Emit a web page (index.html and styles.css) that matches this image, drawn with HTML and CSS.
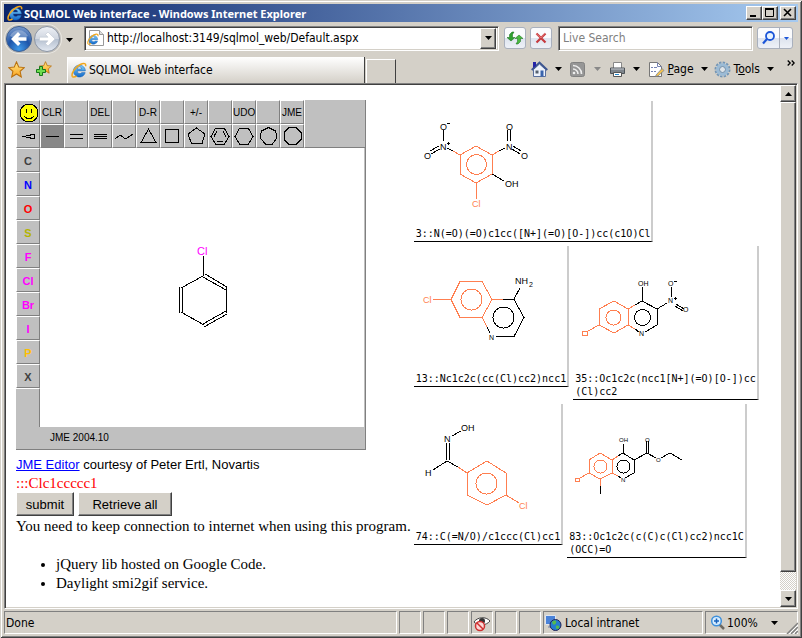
FILE: index.html
```html
<!DOCTYPE html>
<html lang="en">
<head>
<meta charset="utf-8">
<title>SQLMOL Web interface</title>
<link rel="stylesheet" href="styles.css">
</head>
<body>
<svg class="defs" width="0" height="0" aria-hidden="true">
  <defs>
    <linearGradient id="eBlue" x1="0" y1="0" x2="0" y2="1"><stop offset="0" stop-color="#7fd0fa"/><stop offset="1" stop-color="#1268c8"/></linearGradient>
    <radialGradient id="backFill" cx=".5" cy=".9" r=".9"><stop offset="0" stop-color="#3f9bea"/><stop offset=".5" stop-color="#1d54a8"/><stop offset="1" stop-color="#7d9ccc"/></radialGradient>
    <linearGradient id="fwdFill" x1="0" y1="0" x2="0" y2="1"><stop offset="0" stop-color="#eef1f6"/><stop offset=".48" stop-color="#d0d6e0"/><stop offset=".5" stop-color="#b4bfcf"/><stop offset="1" stop-color="#e4eaf2"/></linearGradient>
    <linearGradient id="starFill" x1="0" y1="0" x2="0" y2="1"><stop offset="0" stop-color="#ffe98a"/><stop offset="1" stop-color="#fba21c"/></linearGradient>
    <symbol id="ie" viewBox="0 0 16 16">
      <path d="M14.2 10.6A6 6 0 1 1 14.4 8.9H6.2a2.6 2.6 0 0 0 4.6 1.7zM6.2 7h4.4a2.2 2.2 0 0 0-4.4 0z" fill="url(#eBlue)" stroke="#1a62b4" stroke-width=".5" fill-rule="evenodd"/>
      <path d="M14.5 4.3C15.4 1.5 13 .6 9.3 2.5 4.200 5 .2 11.200 1.200 14.200c.5 1.300 2.300 1 4.300-.2" fill="none" stroke="#f2a71b" stroke-width="1.500"/>
    </symbol>
    <symbol id="down" viewBox="0 0 7 4"><path d="M0 0h7L3.500 4z"/></symbol>
    <symbol id="star" viewBox="0 0 16 16"><path d="M8 .8l2.100 4.900 5.200.5-3.900 3.500 1.100 5.300L8 12.200 3.500 15l1.100-5.300L.7 6.200l5.200-.5z" fill="url(#starFill)" stroke="#b9700f"/></symbol>
  </defs>
</svg>
<div class="window">
  <header class="titlebar">
    <svg class="ico" width="16" height="16"><use href="#ie"/></svg>
    <h1>SQLMOL Web interface - Windows Internet Explorer</h1>
    <button class="cap" aria-label="Minimize"><svg width="12" height="10"><path d="M2 7h6v2H2z"/></svg></button>
    <button class="cap" aria-label="Maximize"><svg width="12" height="10"><path d="M1.500 1v7.500h8V1z" fill="none" stroke="#000"/><path d="M1 0h9v2H1z"/></svg></button>
    <button class="cap close" aria-label="Close"><svg width="12" height="10"><path d="M2 1l7 7M9 1L2 8" stroke="#000" stroke-width="1.600"/></svg></button>
  </header>

  <div class="navrow">
    <div class="travel">
      <button aria-label="Back"><svg width="28" height="28"><circle cx="14" cy="14" r="12.500" fill="url(#backFill)" stroke="#3e5f92"/><path d="M5 11a10 10 0 0 1 18 0c-5 3-13 3-18 0z" fill="#fff" opacity=".3"/><path d="M6 14l7-7 2.500 2.500L13 12.200h8.500v3.600H13l2.500 2.700L13 21z" fill="#fff"/></svg></button>
      <button aria-label="Forward"><svg width="28" height="28"><circle cx="14" cy="14" r="12.500" fill="url(#fwdFill)" stroke="#8b95a5"/><path d="M22 14l-7-7-2.500 2.500 2.500 2.700H6.500v3.600H15l-2.500 2.700L15 21z" fill="#fff" stroke="#b8c0cc" stroke-width=".5"/></svg></button>
    </div>
    <button class="plain recent" aria-label="Recent pages"><svg width="7" height="4"><use href="#down"/></svg></button>
    <div class="address">
      <svg class="ico" width="18" height="18"><path d="M2.500 1.500h10l4 4v11h-14z" fill="#fff" stroke="#999"/><path d="M12.500 1.500v4h4" fill="#ddd" stroke="#999"/><use href="#ie" x="0" y="4" width="12" height="12"/></svg>
      <input type="text" aria-label="Address" value="http://localhost:3149/sqlmol_web/Default.aspx">
      <button class="raised" aria-label="Show addresses"><svg width="7" height="4"><use href="#down"/></svg></button>
    </div>
    <button class="glass" aria-label="Refresh"><svg width="16" height="16"><path d="M0 7.500h2.500V4.500L5 2h2L5.500 4.500v3H8L4 11z" fill="#2fa12f" stroke="#126b16" stroke-width=".5"/><path d="M16 8.500h-2.500v3L11 14H9l1.500-2.500v-3H8L12 5z" fill="#49b93f" stroke="#126b16" stroke-width=".5"/></svg></button>
    <button class="glass" aria-label="Stop"><svg width="16" height="16"><path d="M3.500 3.500l9 9M12.500 3.500l-9 9" stroke="#c63a3e" stroke-width="2.200"/><path d="M3 3.500l5 4.500 4-5" stroke="#ee9090" stroke-width=".7" fill="none"/></svg></button>
    <input class="search" type="text" aria-label="Live Search" placeholder="Live Search">
    <div class="glass split">
      <button aria-label="Search"><svg width="16" height="16"><circle cx="9" cy="6" r="4" fill="#e7f3ff" stroke="#1c56d8" stroke-width="1.800"/><path d="M6 9l-4 4.500" stroke="#1c56d8" stroke-width="2.200"/></svg></button>
      <button aria-label="Search options"><svg width="5" height="3" fill="#1c56d8"><use href="#down"/></svg></button>
    </div>
  </div>

  <div class="tabrow">
    <button class="plain fav" aria-label="Favorites"><svg width="17" height="17"><use href="#star"/></svg></button>
    <button class="plain fav" aria-label="Add to favorites"><svg width="17" height="17"><use href="#star" x="4" y="0" width="13" height="13"/><path d="M4.500 5.500h3v3h3v3h-3v3h-3v-3h-3v-3h3z" fill="#6fdc4e" stroke="#16791b"/></svg></button>
    <a class="tab" href="#page"><svg class="ico" width="16" height="16"><use href="#ie"/></svg>SQLMOL Web interface</a>
    <button class="newtab" aria-label="New tab"></button>
    <nav class="commands">
      <button class="plain" aria-label="Home"><svg width="17" height="17"><path d="M2.500 8.500L8.500 3l6 5.500v7h-12z" fill="#edf2fb" stroke="#5a6f9c"/><path d="M.7 9L8.500 1.500 16.300 9" fill="none" stroke="#3c5590" stroke-width="1.800"/><path d="M2 1h3v4L2 7z" fill="#2424a8"/><path d="M9.500 9.500h3v6h-3z" fill="#3863ac"/><path d="M4.500 9.500h3v3h-3z" fill="#55606e"/></svg><svg class="dn" width="7" height="4"><use href="#down"/></svg></button>
      <button class="plain feeds" aria-label="Feeds" disabled><svg width="15" height="15"><rect x=".5" y=".5" width="14" height="14" rx="2" fill="#969696" stroke="#818181"/><g fill="none" stroke="#eee" stroke-width="1.600"><path d="M3 7a5 5 0 0 1 5 5M3 3.500A8.500 8.500 0 0 1 11.500 12"/></g><circle cx="4" cy="11" r="1.300" fill="#eee"/></svg><svg class="dn" width="7" height="4"><use href="#down"/></svg></button>
      <button class="plain print" aria-label="Print"><svg width="17" height="17"><path d="M4.500 1.500h8v6h-8z" fill="#fff" stroke="#888"/><path d="M1.500 7h14v5.500h-14z" fill="#7e858c" stroke="#4d5358"/><path d="M2 8h13" stroke="#c4c8cc"/><path d="M4.500 11.500h8v4h-8z" fill="#fff" stroke="#555"/><path d="M6 13.500h4" stroke="#2589cc"/></svg><svg class="dn" width="7" height="4"><use href="#down"/></svg></button>
      <button class="plain page"><svg width="17" height="17"><path d="M1.500 1.500h8l4 4v10h-12z" fill="#fff" stroke="#777"/><path d="M9.500 1.500v4h4M3 6.500h2M6 6.500h3M3 10.500h2M6 10.500h2" fill="none" stroke="#7884b4"/><path d="M8 14l6-6.500 2 2L10 15l-2.500.5z" fill="#f4c34d" stroke="#6d7892" stroke-width=".7"/></svg><span><u>P</u>age</span><svg class="dn" width="7" height="4"><use href="#down"/></svg></button>
      <button class="plain tools"><svg width="17" height="17"><circle cx="8.500" cy="8.500" r="7" fill="none" stroke="#7395b5" stroke-width="2" stroke-dasharray="2.400 1.260"/><circle cx="8.500" cy="8.500" r="4.800" fill="none" stroke="#9bbbd6" stroke-width="3"/><circle cx="8.500" cy="8.500" r="3" fill="#dfe4e8" stroke="#6b8cab"/></svg><span>T<u>o</u>ols</span><svg class="dn" width="7" height="4"><use href="#down"/></svg></button>
      <button class="plain more" aria-label="More"><svg width="8" height="6"><path d="M.7.5L3.200 3 .7 5.500M4.700.5L7.200 3 4.700 5.500" fill="none" stroke="#000" stroke-width="1.300"/></svg></button>
    </nav>
  </div>

  <div class="viewport">
    <main id="page">
      <section class="left">
        <div class="jme">
          <div class="tools-grid">
            <button aria-label="SMILES"><svg width="21" height="21"><circle cx="11" cy="11" r="9" fill="#ff0" stroke="#000"/><path d="M8.500 7v4M13.500 7v4" stroke="#000" stroke-width="1.500"/><path d="M6.500 14.500c2 2.700 7 2.700 9 0" fill="none" stroke="#000"/></svg></button>
            <button>CLR</button><button aria-label="Blank"></button><button>DEL</button><button aria-label="Blank"></button><button>D-R</button><button aria-label="Blank"></button><button>+/-</button><button aria-label="Blank"></button><button>UDO</button><button aria-label="Blank"></button><button>JME</button>
            <div class="rest"></div>
            <button aria-label="Stereo bond"><svg width="20" height="20"><path d="M4 10.500h4M8 9.500h5M8 11.500h5M12 8.500h4.500v4H12"/></svg></button>
            <button class="on" aria-label="Single bond"><svg width="20" height="20"><path d="M4 10.500h13"/></svg></button>
            <button aria-label="Double bond"><svg width="20" height="20"><path d="M4 8.500h13M4 12.500h13"/></svg></button>
            <button aria-label="Triple bond"><svg width="20" height="20"><path d="M4 8.500h13M4 10.500h13M4 12.500h13"/></svg></button>
            <button aria-label="Chain"><svg width="20" height="20"><path d="M1 13l5-4 5 3.500L13 12l6-4"/></svg></button>
            <button aria-label="Cyclopropane"><svg width="20" height="20"><path d="M10.500 3L18 16.500H3z"/></svg></button>
            <button aria-label="Cyclobutane"><svg width="20" height="20"><path d="M3.500 3.500h13v13h-13z"/></svg></button>
            <button aria-label="Cyclopentane"><svg width="20" height="20"><path d="M10.500 2L19 8l-3 9.500H5.500L2 8z"/></svg></button>
            <button aria-label="Benzene"><svg width="20" height="20"><path d="M5.500 2.500h9l4.500 8-4.500 7.500h-9L1 10.500zM7 5l-3 5.500M13 5l3 5.500M7 15.500h6"/></svg></button>
            <button aria-label="Cyclohexane"><svg width="20" height="20"><path d="M5.500 2.500h9l4.500 8-4.500 7.500h-9L1 10.500z"/></svg></button>
            <button aria-label="Cycloheptane"><svg width="20" height="20"><path d="M10.500 1.500l7 3.500 1.500 7-4.500 6h-7L2 12l1.500-7z"/></svg></button>
            <button aria-label="Cyclooctane"><svg width="20" height="20"><path d="M7 1.500h7l5 5v7l-5 5H7l-5-5v-7z"/></svg></button>
          </div>
          <div class="jme-body">
            <div class="atoms">
              <button>C</button><button class="n">N</button><button class="o">O</button><button class="s">S</button><button class="hal">F</button><button class="hal">Cl</button><button class="hal">Br</button><button class="hal">I</button><button class="p">P</button><button>X</button>
              <div class="filler"></div>
            </div>
            <div class="canvas">
              <svg width="60" height="90" viewBox="172 241 60 90" fill="none" stroke="#000" shape-rendering="crispEdges">
                <path d="M203.500 256v20M203 276l-22 12M179.500 287v26M182.500 287v26M181 312l23 13M203 277l23 13M205 274l22 13M226.500 287v26M226 311l-23 13M227 314l-23 13"/>
                <text x="197" y="255" class="chem pink">Cl</text>
              </svg>
            </div>
          </div>
          <div class="jme-status">JME 2004.10</div>
        </div>
        <p class="credit"><a href="#editor">JME Editor</a> courtesy of Peter Ertl, Novartis</p>
        <p class="smiles">:::Clc1ccccc1</p>
        <div class="actions"><button>submit</button><button class="wide">Retrieve all</button></div>
        <p>You need to keep connection to internet when using this program.</p>
        <ul><li>jQuery lib hosted on Google Code.</li><li>Daylight smi2gif service.</li></ul>
      </section>

      <section class="results">
        <div class="row">
          <figure>
            <svg width="120" height="126">
              <g class="hit"><path d="M46 54l16-9 16 9v19l-16 9-16-9zM62 82v16M46 54l-7-4M78 54l7-4"/><circle cx="62.500" cy="63.500" r="10"/></g>
              <path d="M39 50l-6-3M85 50l6-3M29.500 29v11M25 45l-9 5M26 48l-9 5M93.500 29v11M96.500 29v11M99 45l8 5M98 48l8 5M78 73l12 7"/>
              <g class="chem"><text x="26" y="29">O</text><path d="M33 22.500h3M33 42.500h3M34.500 41v3" stroke="#000"/><text x="26" y="49">N</text><text x="10" y="58">O</text><text x="92" y="29">O</text><text x="92" y="49">N</text><text x="107" y="58">O</text><text x="91" y="86">OH</text><text x="58" y="106" class="coral">Cl</text></g>
            </svg>
            <figcaption>3::N(=O)(=O)c1cc([N+](=O)[O-])cc(c1O)Cl</figcaption>
          </figure>
        </div>
        <div class="row">
          <figure>
            <svg width="120" height="126">
              <g class="hit"><path d="M19 53.500h18l9-18h22l10 18-10 18H46l-9-18M78 53.500h11M68 71l5 10"/><circle cx="57.500" cy="53.500" r="10.500"/></g>
              <path d="M89 53.500h11l10 18-10 19H82M73 81l3 6M100 53l6-11"/><circle cx="89.500" cy="71.500" r="10.500"/>
              <g class="chem"><text x="9" y="57" class="coral">Cl</text><text x="101" y="38">NH</text><text x="115" y="41" class="tiny">2</text><text x="75" y="94" class="tiny">N</text></g>
            </svg>
            <figcaption>13::Nc1c2c(cc(Cl)cc2)ncc1</figcaption>
          </figure>
          <figure>
            <svg width="120" height="126">
              <g class="hit"><path d="M26 63l15-8 14 8v16l-14 8-15-8zM26 79l-11 6M55 63l7-4M55 79l7 4"/><circle cx="40.500" cy="71.500" r="7.500"/><path d="M9.500 85.500h5v4h-5z"/></g>
              <path d="M62 59l7-4 15 8v16l-12 7M62 83l4 3M69.500 55V41M84 63l10-6M98.500 41v10M103 58l8 5M102 60l8 5"/><circle cx="69.500" cy="71.500" r="8"/>
              <g class="chem tiny"><text x="65" y="40">OH</text><text x="95" y="40">O</text><path d="M101 35.500h3M101 52.500h3M102.500 51v3" stroke="#000"/><text x="95" y="57">N</text><text x="110" y="66">O</text><text x="66" y="90">N</text></g>
            </svg>
            <figcaption>35::Oc1c2c(ncc1[N+](=O)[O-])cc<br>(Cl)cc2</figcaption>
          </figure>
        </div>
        <div class="row">
          <figure>
            <svg width="120" height="126">
              <g class="hit"><path d="M53 69l20-12 19 12v22l-19 10-20-10zM92 91l13 8M53 69l-9-6"/><circle cx="72.500" cy="79.500" r="10.500"/></g>
              <path d="M44 63l-11-6-14 9M32.500 56V39M35.500 56V39M38 32l9-5"/>
              <g class="chem"><text x="47" y="27">OH</text><text x="30" y="38">N</text><text x="11" y="72">H</text><text x="105" y="105" class="coral">Cl</text></g>
            </svg>
            <figcaption>74::C(=N/O)/c1ccc(Cl)cc1</figcaption>
          </figure>
          <figure>
            <svg width="120" height="126">
              <g class="hit"><path d="M22 56l11-7 12 7v13l-12 6-11-6zM22 69l-9 5M45 56l6-4M45 69l6 3M33.500 75v7"/><circle cx="33.500" cy="62.500" r="6.500"/><path d="M8.500 74.500h4v3h-4z"/></g>
              <path d="M51 52l5-3 11 7v13l-9 5M51 72l3 2M33.500 82v8M56.500 49v-9M67 56l13-7 9 5M79.500 49V37M81.500 49V37M94 54l9-5 12 7"/><circle cx="56.500" cy="62.500" r="6.500"/>
              <g class="chem mini"><text x="52" y="38">OH</text><text x="78" y="38">O</text><text x="89" y="58">O</text><text x="54" y="78">N</text></g>
            </svg>
            <figcaption>83::Oc1c2c(c(C)c(Cl)cc2)ncc1C<br>(OCC)=O</figcaption>
          </figure>
        </div>
      </section>
    </main>
    <div class="scroll">
      <button class="raised" aria-label="Scroll up"><svg class="flip" width="7" height="4"><use href="#down"/></svg></button>
      <div class="raised thumb"></div>
      <div class="track"></div>
      <button class="raised" aria-label="Scroll down"><svg width="7" height="4"><use href="#down"/></svg></button>
    </div>
  </div>

  <footer class="status">
    <div class="grow">Done</div>
    <div class="slot"></div><div class="slot"></div><div class="slot"></div>
    <div class="slot"><svg width="18" height="18"><path d="M1 8c3-5 12-6 16-1-4 5-12 5-16 1z" fill="#fff" stroke="#444"/><circle cx="9" cy="7" r="3" fill="#333"/><circle cx="7" cy="12" r="4.500" fill="#fbd7d7" stroke="#cf3030" stroke-width="1.500"/><path d="M4 9l6 6" stroke="#cf3030" stroke-width="1.500"/></svg></div>
    <div class="slot"></div><div class="slot"></div>
    <div class="zone"><svg width="18" height="18"><path d="M1.500 1.500h10v9h-10z" fill="#4a82d8" stroke="#dfe5ef"/><path d="M4 12h5v2H4z" fill="#a0a8b8"/><circle cx="11.500" cy="11" r="5.500" fill="#237bd0" stroke="#225"/><path d="M8 8c3-3 5-1 4 1s-3 3-4-1zM12 12c2-1 4 0 3 2s-4 1-3-2z" fill="#56ba4d"/></svg>Local intranet</div>
    <button class="zoom"><svg width="16" height="16"><path d="M9 9l5 5" stroke="#6f6a62" stroke-width="2.500"/><circle cx="6.500" cy="6" r="4.800" fill="#d9eeff" stroke="#3d8fdb" stroke-width="1.500"/><path d="M4 6h5M6.500 3.500v5" stroke="#1761bc" stroke-width="1.500"/></svg><span>100%</span><svg width="7" height="4"><use href="#down"/></svg></button>
    <svg class="grip" width="12" height="12"><path d="M12 1L1 12M12 5l-7 7M12 9l-3 3" stroke="#808080" stroke-width="1.500"/><path d="M12 3l-9 9M12 7l-5 5" stroke="#fff"/></svg>
  </footer>
</div>
</body>
</html>
```
FILE: styles.css
```css
* { box-sizing: border-box; }
body, h1, p, figure { margin: 0; }
body { background: #d4d0c8; font: 12px "DejaVu Sans Condensed", "DejaVu Sans", sans-serif; color: #000; }
button, input { font: inherit; color: inherit; }
button { padding: 0; border: 0; background: none; }
svg { flex: none; display: block; }
.defs { position: absolute; }

.window {
  display: flex; flex-direction: column; min-height: 100vh; padding: 4px; background: #d4d0c8;
  box-shadow: inset 1px 1px #d4d0c8, inset -1px -1px #404040, inset 2px 2px #fff, inset -2px -2px #808080;
}
.raised, .cap, .actions button {
  background: #d4d0c8; border: 1px solid; border-color: #fff #404040 #404040 #fff; box-shadow: inset -1px -1px #808080;
}

.titlebar { display: flex; align-items: center; height: 18px; padding: 0 2px 0 3px; background: linear-gradient(90deg, #0a246a, #a6caf0); }
.titlebar h1 { flex: 1; margin-left: 1px; color: #fff; font: bold 11px "Noto Sans", sans-serif; white-space: nowrap; }
.cap { display: grid; place-items: center; width: 16px; height: 14px; }
.close { margin-left: 2px; }

.navrow { display: flex; align-items: center; height: 32px; padding: 0 5px 0 1px; }
.travel { display: flex; margin-top: 2px; border-radius: 14px; background: #c1bfba; box-shadow: 0 0 0 1px #e9e7e2; }
.plain { display: flex; align-items: center; }
.recent { margin: 4px 11px 0 5px; }
.address, .search { height: 25px; background: #fff; border: 1px solid; border-color: #808080 #fff #fff #808080; box-shadow: inset 1px 1px #404040, inset -1px -1px #d4d0c8; }
.address { display: flex; align-items: center; flex: 1; margin-right: 5px; padding: 2px; }
.address input { flex: 1; min-width: 0; margin-left: 2px; padding: 0; border: 0; background: none; outline: 0; }
.address .raised { display: grid; place-items: center; width: 16px; height: 21px; }
.glass { display: grid; place-items: center; flex: none; width: 22px; height: 22px; margin-right: 4px; border: 1px solid #a9b0bd; border-radius: 3px; background: linear-gradient(#fafbfd 50%, #dde3ee 50%, #eef1f7); }
.search { flex: 0 1 195px; min-width: 0; margin: 0 4px 0 2px; padding: 0 4px; }
.search::placeholder { color: #808080; opacity: 1; }
.split { width: 36px; grid-template-columns: 21px 1fr; margin: 0; }
.split button { display: grid; place-items: center; height: 20px; }
.split button + button { border-left: 1px solid #a9b0bd; width: 100%; }

.tabrow { display: flex; align-items: flex-end; height: 29px; padding: 0 3px 0 4px; }
.fav { width: 27px; height: 28px; }
.tab { display: flex; align-items: center; gap: 2px; flex: 0 1 298px; height: 26px; margin-left: 5px; padding-left: 3px; color: #000; text-decoration: none; white-space: nowrap; background: linear-gradient(#fff, #d4d0c8); border-left: 1px solid #fff; border-right: 1px solid #404040; }
.newtab { width: 30px; height: 24px; margin-left: 1px; border: solid; border-width: 1px 1px 0; border-color: #fff #404040 #fff #fff; }
.commands { display: flex; align-items: center; height: 28px; margin-left: auto; }
.commands .plain { margin-left: 8px; }
.commands .dn { margin-left: 7px; }
.commands .feeds .dn { margin-left: 9px; fill: #888; }
.commands .page span { margin-left: 2px; }
.commands .tools { margin-left: 6px; }
.commands .tools span { margin-left: 3px; }
.commands .more { margin: 0 0 12px 13px; }

.viewport { display: flex; flex: 1; border: 1px solid; border-color: #808080 #fff #fff #808080; box-shadow: inset 1px 1px #404040; padding: 1px; }
main { display: flex; flex: 1; gap: 3px; min-width: 0; padding: 15px 0 14px 10px; background: #fff; font: 15px/19px "Liberation Serif", serif; }
.left { flex: none; }

.jme { width: 350px; margin-bottom: 5px; background: silver; border: solid gray; border-width: 0 1px 1px 0; font: 10px "Liberation Sans", sans-serif; }
.tools-grid { display: grid; grid-template-columns: repeat(12, 24px) 1fr; grid-auto-rows: 24px; }
.jme button { display: grid; place-items: center; border: 1px solid; border-color: #fff gray gray #fff; }
.tools-grid svg { fill: none; stroke: #000; shape-rendering: crispEdges; }
.tools-grid .on { background: #888; }
.rest { grid-column: 13; grid-row: 1 / 3; border-left: 1px solid #fff; border-bottom: 1px solid gray; }
.jme-body { display: flex; }
.atoms { width: 24px; font-size: 11px; font-weight: bold; color: #404040; }
.atoms button { width: 24px; height: 24px; padding-top: 2px; }
.filler { height: 39px; border: solid; border-width: 1px 1px 0 0; border-color: #fff gray; }
.atoms .n { color: #00f; }
.atoms .o { color: red; }
.atoms .s { color: #b4b400; }
.atoms .hal { color: #f0f; }
.atoms .p { color: #ffc000; }
.canvas { flex: 1; display: grid; padding: 93px 0 0 132px; margin-right: 1px; background: #fff; }
.jme-status { height: 22px; padding-left: 34px; line-height: 22px; }

.chem { fill: #000; stroke: none; font: 9px "Liberation Sans", sans-serif; }
.pink { fill: #f0f; font-size: 11px; }
.coral { fill: #ff7f50; }
.tiny { font-size: 7px; }
.mini { font-size: 6px; }

.credit { font: 13px/19px "Liberation Sans", sans-serif; }
.credit a { color: #00f; }
.smiles { color: red; line-height: 18px; }
.actions { display: flex; gap: 4px; margin-bottom: 1px; font: 13px "Liberation Sans", sans-serif; }
.actions button { width: 58px; height: 24px; }
.actions .wide { width: 94px; }
ul { margin: 19px 0 0; padding-left: 40px; }

.results { display: flex; flex-direction: column; gap: 4px; padding-top: 1px; font: 10px/13px "DejaVu Sans Mono", monospace; }
.row { display: flex; align-items: flex-start; gap: 4px; }
figure { border-right: 2px solid #ccc; border-bottom: 1px solid #000; padding-bottom: 1px; }
figure svg { fill: none; stroke: #000; shape-rendering: crispEdges; }
figcaption { padding: 0 1px 0 2px; white-space: nowrap; }
.hit { stroke: #ff7f50; }

.scroll { display: flex; flex-direction: column; width: 16px; }
.scroll button { display: grid; place-items: center; height: 17px; }
.thumb { flex: 471; }
.track { flex: 18; background: repeating-conic-gradient(#fff 0 25%, #d4d0c8 0 50%) 0 0 / 2px 2px; }
.flip { transform: rotate(180deg); }

.status { display: flex; align-items: center; gap: 2px; margin-top: 2px; height: 23px; position: relative; }
.status > div, .zoom { display: flex; align-items: center; height: 23px; border: 1px solid; border-color: #808080 #fff #fff #808080; }
.grow { flex: 1; padding-left: 1px; }
.slot { width: 22px; justify-content: center; }
.zone { width: 160px; gap: 3px; }
.zoom { width: 93px; gap: 1px; padding-left: 4px; }
.zoom span { margin-right: 12px; }
.grip { position: absolute; right: 0; bottom: 0; }
```
